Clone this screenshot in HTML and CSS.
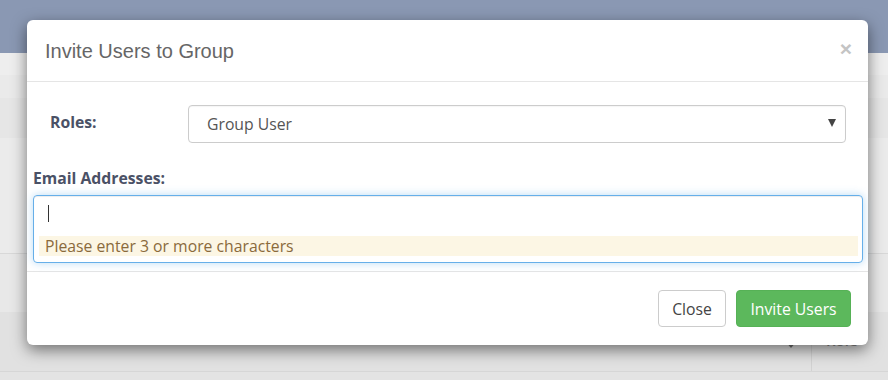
FILE: index.html
```html
<!DOCTYPE html>
<html>
<head>
<meta charset="utf-8">
<link rel="stylesheet" href="styles.css">
</head>
<body>
<div class="page">
  <div class="topbar"></div>
  <div class="row r1"></div>
  <div class="row r2"></div>
  <div class="row r3"></div>
  <div class="row r4"></div>
  <div class="row r5"></div>
  <div class="row r6">
    <div class="cell c-main"></div>
    <div class="cell c-caret"><span class="caret-bg"></span></div>
    <div class="cell c-role">Role</div>
  </div>
  <div class="row r7"></div>
</div>

<div class="modal">
  <div class="modal-header">
    <h4 class="modal-title">Invite Users to Group</h4>
    <span class="close">×</span>
  </div>
  <div class="modal-body">
    <div class="form-row">
      <label class="lbl lbl-roles">Roles:</label>
      <div class="select">
        <span class="select-text">Group User</span>
        <span class="select-arrow"></span>
      </div>
    </div>
    <label class="lbl lbl-email">Email Addresses:</label>
    <div class="tag-input">
      <div class="search-line"><span class="cursor"></span></div>
      <div class="hint">Please enter 3 or more characters</div>
    </div>
  </div>
  <div class="modal-footer">
    <button class="btn btn-default">Close</button>
    <button class="btn btn-success">Invite Users</button>
  </div>
</div>
</body>
</html>
```

FILE: styles.css
```css
* { box-sizing: border-box; }
html, body { margin: 0; padding: 0; }
body {
  width: 888px;
  height: 380px;
  overflow: hidden;
  background: #e3e3e3;
  font-family: "Open Sans", "Liberation Sans", sans-serif;
  position: relative;
}
.page { display: flex; flex-direction: column; }
.topbar { height: 53px; background: #8a98b3; }
.row { width: 100%; }
.r1 { height: 22px; background: #eeeeee; }
.r2 { height: 23px; background: #eaeaea; }
.r3 { height: 40px; background: #e6e6e6; }
.r4 { height: 116px; background: #ebebeb; border-bottom: 1px solid #d8d8d8; }
.r5 { height: 58px; background: #e8e8e8; }
.r6 { height: 60px; background: #e1e1e1; display: flex; border-bottom: 1px solid #d6d6d6; }
.r7 { height: 20px; background: #e3e3e3; }
.c-main { flex: 0 0 772px; }
.c-caret { flex: 0 0 40px; border-right: 1px solid #d2d2d2; position: relative; }
.caret-bg {
  position: absolute; left: 14px; top: 30px;
  width: 0; height: 0;
  border-left: 5px solid transparent; border-right: 5px solid transparent;
  border-top: 6px solid #6e6e6e;
}
.c-role { padding: 18px 0 0 14px; font-size: 15px; font-weight: 600; color: #8a8a8a; }

.modal {
  position: absolute;
  left: 27px;
  top: 20px;
  width: 841px;
  height: 325px;
  background: #fff;
  border-radius: 6px;
  box-shadow: 0 5px 15px rgba(0,0,0,.5);
  display: flex;
  flex-direction: column;
}
.modal-header {
  height: 62px;
  border-bottom: 1px solid #e5e5e5;
  display: flex;
  align-items: center;
  justify-content: space-between;
  padding: 2px 16px 0 18px;
}
.modal-title {
  margin: 0;
  font-family: "Liberation Sans", Arial, sans-serif;
  font-weight: normal;
  font-size: 20px;
  color: #666;
}
.close {
  font-family: "Liberation Sans", Arial, sans-serif;
  font-size: 21px;
  font-weight: bold;
  color: #c4c4c4;
  line-height: 1;
  margin-top: -7px;
}
.modal-body {
  height: 190px;
  padding: 23px 5px 0 6px;
  border-bottom: 1px solid #e5e5e5;
}
.form-row {
  display: flex;
  align-items: center;
  padding: 0 17px;
  height: 38px;
}
.lbl {
  font-weight: bold;
  font-size: 15.75px;
  color: #4a5166;
  display: block;
}
.lbl-roles { width: 138px; flex: 0 0 138px; margin-top: -4px; }
.select {
  flex: 1;
  height: 38px;
  border: 1px solid #cccccc;
  border-radius: 4px;
  display: flex;
  align-items: center;
  justify-content: space-between;
  padding: 0 9px 0 18px;
  box-shadow: inset 0 1px 1px rgba(0,0,0,.04);
}
.select-text { font-size: 15.75px; color: #555; }
.select-arrow {
  width: 0; height: 0;
  border-left: 4px solid transparent;
  border-right: 4px solid transparent;
  border-top: 8px solid #444;
  margin-top: -3px;
}
.lbl-email { margin-top: 25px; line-height: 20px; }
.tag-input {
  margin-top: 7px;
  height: 68px;
  border: 1px solid #66afe9;
  border-radius: 4px;
  box-shadow: inset 0 1px 1px rgba(0,0,0,.075), 0 0 8px rgba(102,175,233,.45);
  padding: 9px 4px 0 5px;
}
.search-line { height: 31px; padding-left: 9px; }
.cursor { display: block; width: 1px; height: 17px; background: #333; }
.hint {
  height: 20px;
  background: #fcf6e4;
  color: #8a6a3c;
  font-size: 15.75px;
  line-height: 20px;
  padding-left: 6px;
}
.modal-footer {
  flex: 1;
  display: flex;
  justify-content: flex-end;
  align-items: flex-start;
  gap: 10px;
  padding: 18px 17px 0 0;
}
.btn {
  font-family: "Open Sans", "Liberation Sans", sans-serif;
  font-size: 15.75px;
  height: 37px;
  border-radius: 4px;
  padding: 0;
  border: 1px solid transparent;
  cursor: pointer;
}
.btn-default { background: #fff; border-color: #cccccc; color: #444; width: 68px; }
.btn-success { background: #5cb85c; border-color: #56b156; color: #fff; width: 115px; }
```
